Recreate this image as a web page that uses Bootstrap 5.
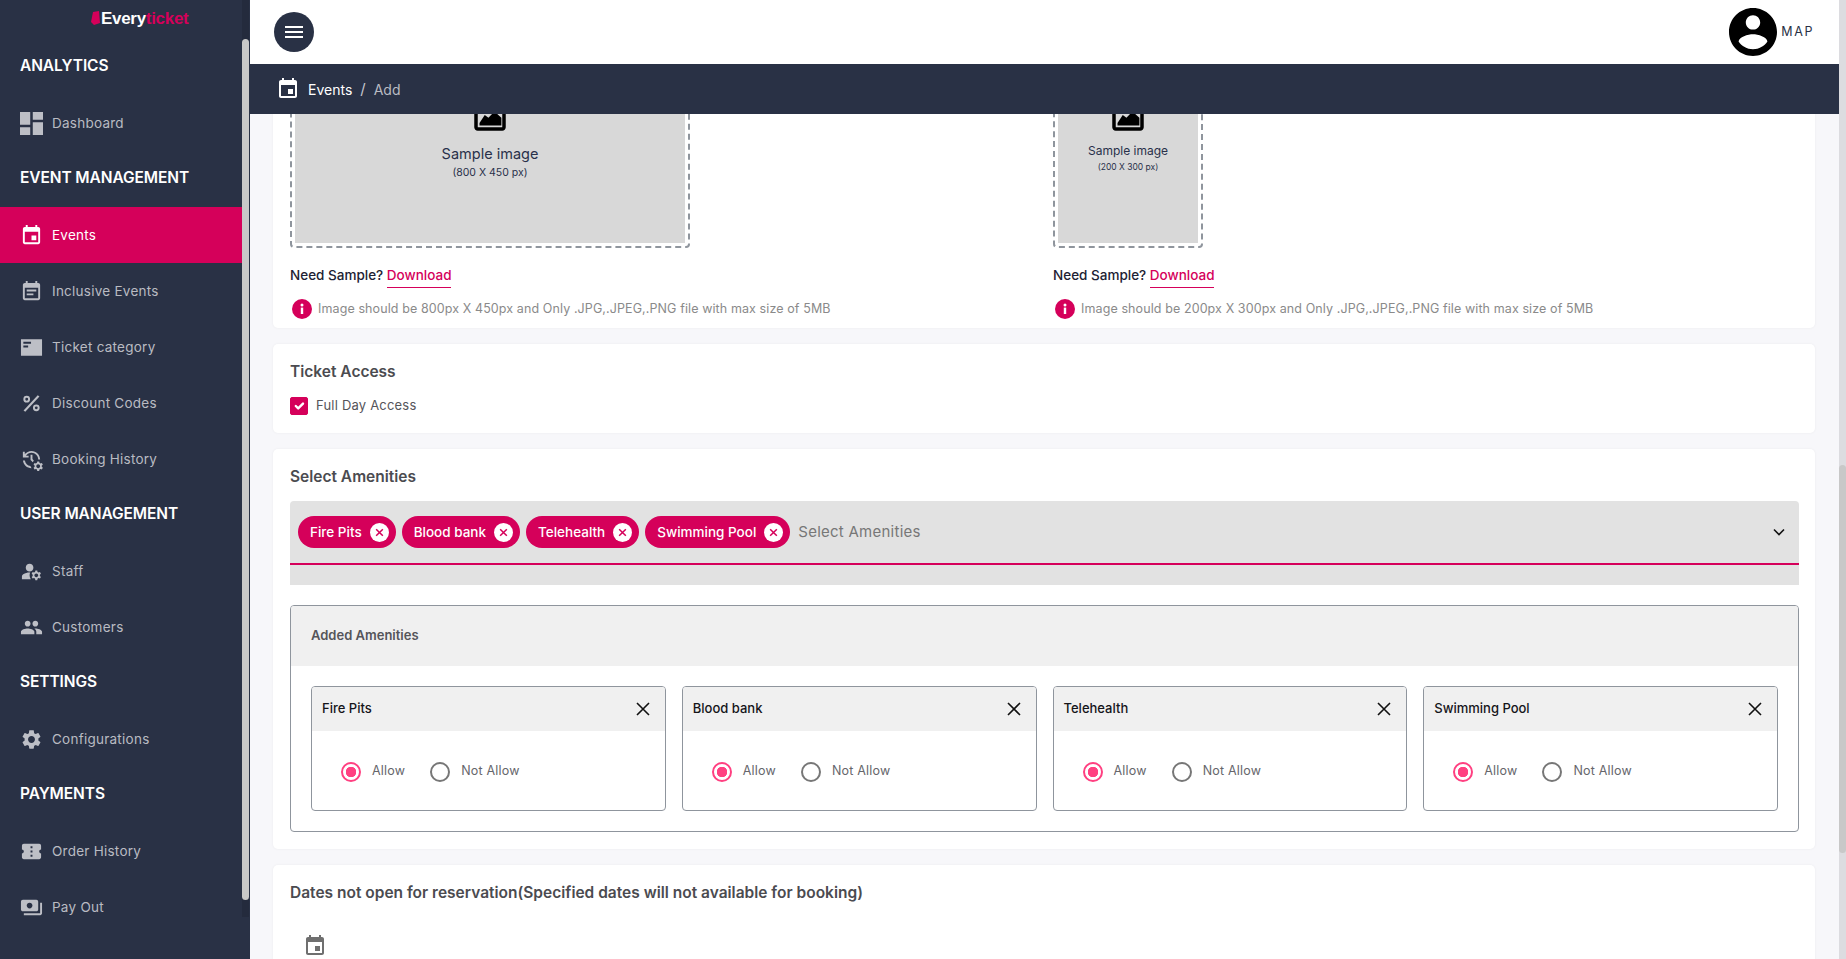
<!DOCTYPE html>
<html lang="en">
<head>
    <meta charset="UTF-8">
    <meta name="viewport" content="width=device-width, initial-scale=1.0">
    <link href="https://cdn.jsdelivr.net/npm/bootstrap@5.3.2/dist/css/bootstrap.min.css" rel="stylesheet">
    <title>Events - Add</title>
    <style>
        :root { --navy: #293145; --pink: #d5005a; --rule: #8f959d; }
        html, body { height: 959px; overflow: hidden; }
        body { font-family: Inter, "Open Sans", "Liberation Sans", sans-serif; background: #f7f7fa; }

        .app-shell { height: 959px; }
        .side-bar { width: 250px; flex: none; background: var(--navy); }
        .side-menu { width: 242px; flex: none; }
        .logo-row { height: 39px; padding: 10px 0 0 91px; font-family: "Liberation Sans Narrow", "Liberation Sans", sans-serif; font-size: 17px; line-height: 17px; font-weight: 700; letter-spacing: -.3px; }
        .logo-row svg { width: 9px; height: 14px; margin-right: 1px; vertical-align: -1px; }
        .logo-light { color: #fff; }
        .logo-pink { color: var(--pink); }
        .menu-head, .menu-item { height: 56px; padding-left: 20px; display: flex; align-items: center; }
        .menu-head { color: #fff; font-size: 15.5px; font-weight: 600; padding-bottom: 2px; letter-spacing: -.1px; }
        .menu-item { color: #b9bbc2; font-size: 13.5px; letter-spacing: .25px; text-decoration: none; gap: 9px; }
        .menu-item svg { width: 23px; height: 23px; fill: #bdbfc6; flex: none; }
        .menu-item.is-active { background: var(--pink); color: #fff; }
        .menu-item.is-active svg { fill: #fff; }
        .side-track { width: 7px; height: 917px; background: #242b3d; }
        .side-thumb { height: 861px; margin-top: 39px; background: #c8c8c8; border-radius: 4px; }

        .main-col { min-width: 0; }
        .top-bar { height: 64px; padding: 0 25px 0 24px; background: #fff; }
        .burger { width: 40px; height: 40px; border-radius: 50%; background: var(--navy); border: 0; padding: 0; }
        .burger span { display: block; width: 18px; height: 2px; background: #fff; margin: 3px auto 0; }
        .burger span:first-child { margin-top: 0; }
        .avatar-icon { width: 48px; height: 48px; margin: 0 4px; }
        .user-tag { color: var(--navy); font-size: 12.5px; letter-spacing: 1.6px; margin-left: 0; }
        .crumb-bar { height: 50px; padding-left: 26px; background: var(--navy); color: #fff; font-size: 14px; }
        .crumb-bar svg { width: 24px; height: 24px; fill: #fff; margin-right: 8px; }
        .crumb-sep { margin: 0 8px; color: #c5c7cd; font-size: 15px; }
        .crumb-now { color: #b9bbc2; }

        .scroll-view { height: 845px; overflow: hidden; padding: 0 24px 0 23px; }
        .scroll-inner { margin-top: -105px; }
        .panel { border: 0; border-radius: 5px; margin-bottom: 16px; padding: 16px 16px 0 17px; box-shadow: 0 0 3px rgba(0, 0, 0, .05); }
        .panel-first { margin-top: 0; padding-top: 0; height: 319px; border-radius: 0 0 5px 5px; }
        .panel-title { color: #4b4b50; font-size: 15.5px; line-height: 24px; font-weight: 600; margin: 0; }

        .upload-col { width: 763px; flex: none; padding-top: 9px; }
        .drop-zone { border: 2px dashed var(--rule); border-radius: 4px; padding: 3px; height: 230px; }
        .drop-wide { width: 400px; }
        .drop-tall { width: 150px; }
        .drop-fill { background: #d8d8d8; height: 100%; text-align: center; color: #29314a; padding-top: 71px; }
        .drop-fill svg { display: block; margin: 0 auto; }
        .drop-wide svg { width: 42px; height: 42px; margin-bottom: 8px; }
        .drop-tall svg { width: 42px; height: 42px; margin-bottom: 6px; }
        .sample-big { font-size: 14.5px; line-height: 20px; }
        .sample-tiny { font-size: 10.5px; line-height: 17px; }
        .drop-tall .sample-big { font-size: 12px; line-height: 18px; }
        .drop-tall .sample-tiny { font-size: 8.5px; line-height: 14px; }
        .need-line { margin-top: 17px; font-size: 13.5px; line-height: 20px; font-weight: 500; color: #1d2233; }
        .need-line a { color: var(--pink); text-decoration: none; border-bottom: 1px solid var(--pink); padding-bottom: 2px; display: inline-block; line-height: 20px; }
        .hint-line { margin-top: 11px; gap: 6px; color: #8a8a8a; font-size: 12.5px; line-height: 20px; letter-spacing: .1px; padding-left: 2px; }
        .hint-line svg { width: 20px; height: 20px; flex: none; }

        .access-row { margin: 13px 0 18px; height: 18px; }
        .form-check-input.pink-box { width: 18px; height: 18px; margin: 0 8px 0 0; border-radius: 2px; }
        .form-check-input.pink-box:checked { background-color: var(--pink); border-color: var(--pink); }
        .access-row label { color: #55555a; font-size: 13px; letter-spacing: .2px; }

        .select-wrap { margin-top: 12px; background: #e2e2e2; padding-bottom: 20px; border-radius: 4px 4px 0 0; }
        .select-line { height: 64px; padding: 0 14px 0 8px; border-bottom: 2px solid var(--pink); gap: 6px; }
        .tag-pill { height: 32px; padding: 0 7px 0 12px; gap: 8px; border-radius: 16px; background: var(--pink); color: #fff; font-size: 13.5px; font-weight: 500; }
        .tag-pill svg { width: 19px; height: 19px; flex: none; }
        .select-hint { color: #777; font-size: 15px; letter-spacing: .25px; margin-left: 2px; }
        .select-line .chev { width: 12px; height: 8px; margin-left: auto; }

        .added-box { margin: 20px 0 17px; border: 1px solid var(--rule); border-radius: 4px; overflow: hidden; }
        .added-head { height: 60px; padding-left: 20px; background: #f0f0f0; color: #55555a; font-size: 13px; font-weight: 600; }
        .added-body { padding: 20px 20px; }
        .mini-card { border: 1px solid var(--rule); border-radius: 4px; height: 125px; overflow: hidden; }
        .mini-head { height: 44px; padding: 0 15px 0 10px; background: #f0f0f0; color: #15151a; font-size: 13px; font-weight: 500; }
        .mini-head svg { width: 14px; height: 14px; }
        .mini-body { height: 79px; padding: 2px 0 0 29px; gap: 25px; }
        .radio-opt { gap: 11px; color: #66666b; font-size: 12.5px; letter-spacing: .2px; }
        .form-check-input.pink-radio { width: 20px; height: 20px; margin: 0; border: 2px solid #777; background-color: #fff; }
        .form-check-input.pink-radio:checked { border-color: #ff4081; background-image: radial-gradient(circle, #ff4081 0 5px, #fff 5.5px); }

        .panel-last { height: 120px; margin-bottom: 0; }
        .date-icon { width: 24px; height: 24px; fill: #6f6f6f; display: block; margin: 29px 0 0 13px; }

        .page-track { width: 7px; flex: none; height: 959px; background: #dcdce0; }
        .page-thumb { height: 388px; margin-top: 465px; background: #c8c8c8; border-radius: 4px; }
    </style>
</head>
<body>
<svg width="0" height="0" class="position-absolute">
    <symbol id="i-dashboard" viewBox="3 3 18 18"><path d="M3 13h8V3H3v10zm0 8h8v-6H3v6zm10 0h8V11h-8v10zm0-18v6h8V3h-8z"/></symbol>
    <symbol id="i-event" viewBox="0 0 24 24"><path d="M17 12h-5v5h5v-5zM16 1v2H8V1H6v2H5c-1.11 0-1.99.9-1.99 2L3 19c0 1.1.89 2 2 2h14c1.1 0 2-.9 2-2V5c0-1.1-.9-2-2-2h-1V1h-2zm3 18H5V8h14v11z"/></symbol>
    <symbol id="i-note" viewBox="0 0 24 24"><path d="M17 10H7v2h10v-2zm2-7h-1V1h-2v2H8V1H6v2H5c-1.11 0-1.99.9-1.99 2L3 19c0 1.1.89 2 2 2h14c1.1 0 2-.9 2-2V5c0-1.1-.9-2-2-2zm0 16H5V8h14v11zm-5-5H7v2h7v-2z"/></symbol>
    <symbol id="i-ticket" viewBox="0 0 24 24"><path fill-rule="evenodd" d="M1 3.5h22v17H1zM3.5 6v2h8V6zm0 4v2h5v-2z"/></symbol>
    <symbol id="i-percent" viewBox="0 0 24 24"><path d="M7 4a3.5 3.5 0 1 0 0 7 3.5 3.5 0 0 0 0-7zm0 2a1.5 1.5 0 1 1 0 3 1.5 1.5 0 0 1 0-3zM17 13a3.5 3.5 0 1 0 0 7 3.5 3.5 0 0 0 0-7zm0 2a1.5 1.5 0 1 1 0 3 1.5 1.5 0 0 1 0-3zM18.5 3.5l1.8 1.3L5.5 20.5l-1.8-1.3z"/></symbol>
    <symbol id="i-history" viewBox="0 0 24 24"><path d="M22.69 18.37l1.14-1-1-1.73-1.45.49c-.32-.27-.68-.48-1.08-.63L20 14h-2l-.3 1.49c-.4.15-.76.36-1.08.63l-1.45-.49-1 1.73 1.14 1c-.08.5-.08.76 0 1.26l-1.14 1 1 1.73 1.45-.49c.32.27.68.48 1.08.63L18 24h2l.3-1.49c.4-.15.76-.36 1.08-.63l1.45.49 1-1.73-1.14-1c.08-.51.08-.77 0-1.27zM19 21c-1.1 0-2-.9-2-2s.9-2 2-2 2 .9 2 2-.9 2-2 2zM11 7v5.41l2.36 2.36 1.04-1.79-1.4-1.39V7h-2zm10 5c0-4.97-4.03-9-9-9-2.83 0-5.35 1.32-7 3.36V4H3v6h6V8H6.26C7.53 6.19 9.63 5 12 5c3.86 0 7 3.14 7 7h2zm-10.14 6.91c-2.99-.49-5.35-2.9-5.78-5.91H3.06c.5 4.5 4.31 8 8.94 8h.07l-1.21-2.09z"/></symbol>
    <symbol id="i-staff" viewBox="0 0 24 24"><path d="M10.67 13.02c-.22-.01-.44-.02-.67-.02-2.42 0-4.68.67-6.61 1.82-.88.52-1.39 1.5-1.39 2.53V20h9.26c-.79-1.13-1.26-2.51-1.26-4 0-1.07.25-2.07.67-2.98zM10 12c2.21 0 4-1.79 4-4s-1.79-4-4-4-4 1.79-4 4 1.79 4 4 4zM20.75 16c0-.22-.03-.42-.06-.63l1.14-1.01-1-1.73-1.45.49c-.32-.27-.68-.48-1.08-.63L18 11h-2l-.3 1.49c-.4.15-.76.36-1.08.63l-1.45-.49-1 1.73 1.14 1.01c-.03.21-.06.41-.06.63s.03.42.06.63l-1.14 1.01 1 1.73 1.45-.49c.32.27.68.48 1.08.63L16 21h2l.3-1.49c.4-.15.76-.36 1.08-.63l1.45.49 1-1.73-1.14-1.01c.03-.21.06-.41.06-.63zM17 18c-1.1 0-2-.9-2-2s.9-2 2-2 2 .9 2 2-.9 2-2 2z"/></symbol>
    <symbol id="i-people" viewBox="0 0 24 24"><path d="M16 11c1.66 0 2.99-1.34 2.99-3S17.66 5 16 5c-1.66 0-3 1.34-3 3s1.34 3 3 3zm-8 0c1.66 0 2.99-1.34 2.99-3S9.66 5 8 5C6.34 5 5 6.34 5 8s1.34 3 3 3zm0 2c-2.33 0-7 1.17-7 3.5V19h14v-2.5c0-2.33-4.67-3.5-7-3.5zm8 0c-.29 0-.62.02-.97.05 1.16.84 1.97 1.97 1.97 3.45V19h6v-2.5c0-2.33-4.67-3.5-7-3.5z"/></symbol>
    <symbol id="i-gear" viewBox="0 0 24 24"><path d="M19.14 12.94c.04-.3.06-.61.06-.94 0-.32-.02-.64-.07-.94l2.03-1.58c.18-.14.23-.41.12-.61l-1.92-3.32c-.12-.22-.37-.29-.59-.22l-2.39.96c-.5-.38-1.03-.7-1.62-.94l-.36-2.54c-.04-.24-.24-.41-.48-.41h-3.84c-.24 0-.43.17-.47.41l-.36 2.54c-.59.24-1.13.57-1.62.94l-2.39-.96c-.22-.08-.47 0-.59.22L2.74 8.87c-.12.21-.08.47.12.61l2.03 1.58c-.05.3-.09.63-.09.94s.02.64.07.94l-2.03 1.58c-.18.14-.23.41-.12.61l1.92 3.32c.12.22.37.29.59.22l2.39-.96c.5.38 1.03.7 1.62.94l.36 2.54c.05.24.24.41.48.41h3.84c.24 0 .44-.17.47-.41l.36-2.54c.59-.24 1.13-.56 1.62-.94l2.39.96c.22.08.47 0 .59-.22l1.92-3.32c.12-.22.07-.47-.12-.61l-2.01-1.58zM12 15.6c-1.98 0-3.6-1.62-3.6-3.6s1.62-3.6 3.6-3.6 3.6 1.62 3.6 3.6-1.62 3.6-3.6 3.6z"/></symbol>
    <symbol id="i-order" viewBox="0 0 24 24"><path d="M22 10V6c0-1.11-.9-2-2-2H4c-1.1 0-1.99.89-1.99 2v4c1.1 0 1.99.9 1.99 2s-.89 2-2 2v4c0 1.1.9 2 2 2h16c1.1 0 2-.9 2-2v-4c-1.1 0-2-.9-2-2s.9-2 2-2zm-9 7.5h-2v-2h2v2zm0-4.5h-2v-2h2v2zm0-4.5h-2v-2h2v2z"/></symbol>
    <symbol id="i-pay" viewBox="0 0 24 24"><path d="M19 14V6c0-1.1-.9-2-2-2H3c-1.1 0-2 .9-2 2v8c0 1.1.9 2 2 2h14c1.1 0 2-.9 2-2zm-9-1c-1.66 0-3-1.34-3-3s1.34-3 3-3 3 1.34 3 3-1.34 3-3 3zm13-6v11c0 1.1-.9 2-2 2H4v-2h17V7h2z"/></symbol>
    <symbol id="i-picture" viewBox="0 0 24 24"><path d="M19 5v14H5V5h14m0-2H5c-1.1 0-2 .9-2 2v14c0 1.1.9 2 2 2h14c1.1 0 2-.9 2-2V5c0-1.1-.9-2-2-2z"/><path d="M14.5 10l-3.4 3.6L9 12l-3 4.5V18h12.5v-4.5z"/></symbol>
    <symbol id="i-info" viewBox="0 0 20 20"><circle cx="10" cy="10" r="10" fill="#d5005a"/><rect x="8.8" y="8.6" width="2.4" height="6.4" fill="#fff"/><circle cx="10" cy="6" r="1.5" fill="#fff"/></symbol>
    <symbol id="i-chipx" viewBox="0 0 20 20"><circle cx="10" cy="10" r="10" fill="#fff"/><path d="M6.5 6.5l7 7m0-7l-7 7" stroke="#d5005a" stroke-width="1.6" fill="none"/></symbol>
    <symbol id="i-close" viewBox="0 0 14 14"><path d="M1 1l12 12M13 1L1 13" stroke="#111" stroke-width="1.6" fill="none"/></symbol>
</svg>

<div class="app-shell d-flex">
    <!-- sidebar -->
    <aside class="side-bar d-flex">
        <div class="side-menu">
            <div class="logo-row">
                <svg viewBox="0 0 9 14"><path d="M2 1l6-1 1 12-6 2-3-3z" fill="#d5005a"/></svg><span class="logo-light">Every</span><span class="logo-pink">ticket</span>
            </div>
            <div class="menu-head">ANALYTICS</div>
            <a class="menu-item" href="#"><svg><use href="#i-dashboard"/></svg>Dashboard</a>
            <div class="menu-head">EVENT MANAGEMENT</div>
            <a class="menu-item is-active" href="#"><svg><use href="#i-event"/></svg>Events</a>
            <a class="menu-item" href="#"><svg><use href="#i-note"/></svg>Inclusive Events</a>
            <a class="menu-item" href="#"><svg><use href="#i-ticket"/></svg>Ticket category</a>
            <a class="menu-item" href="#"><svg><use href="#i-percent"/></svg>Discount Codes</a>
            <a class="menu-item" href="#"><svg><use href="#i-history"/></svg>Booking History</a>
            <div class="menu-head">USER MANAGEMENT</div>
            <a class="menu-item" href="#"><svg><use href="#i-staff"/></svg>Staff</a>
            <a class="menu-item" href="#"><svg><use href="#i-people"/></svg>Customers</a>
            <div class="menu-head">SETTINGS</div>
            <a class="menu-item" href="#"><svg><use href="#i-gear"/></svg>Configurations</a>
            <div class="menu-head">PAYMENTS</div>
            <a class="menu-item" href="#"><svg><use href="#i-order"/></svg>Order History</a>
            <a class="menu-item" href="#"><svg><use href="#i-pay"/></svg>Pay Out</a>
        </div>
        <div class="side-track"><div class="side-thumb"></div></div>
    </aside>

    <div class="main-col flex-grow-1">
        <!-- top bar -->
        <header class="top-bar d-flex align-items-center justify-content-between">
            <button class="burger d-flex flex-column align-items-center justify-content-center" type="button" aria-label="Menu"><span></span><span></span><span></span></button>
            <div class="d-flex align-items-center">
                <svg class="avatar-icon" viewBox="2 2 20 20"><path d="M12 2C6.48 2 2 6.48 2 12s4.48 10 10 10 10-4.48 10-10S17.52 2 12 2zm0 3c1.66 0 3 1.34 3 3s-1.34 3-3 3-3-1.34-3-3 1.34-3 3-3zm0 14.2c-2.5 0-4.71-1.28-6-3.22.03-1.99 4-3.08 6-3.08 1.99 0 5.97 1.09 6 3.08-1.29 1.94-3.5 3.22-6 3.22z"/></svg>
                <span class="user-tag">MAP</span>
            </div>
        </header>

        <!-- breadcrumb -->
        <nav class="crumb-bar d-flex align-items-center">
            <svg><use href="#i-event"/></svg>
            <span>Events</span><span class="crumb-sep">/</span><span class="crumb-now">Add</span>
        </nav>

        <div class="scroll-view">
            <div class="scroll-inner">
                <!-- banner uploads -->
                <div class="card panel panel-first">
                    <div class="d-flex">
                        <div class="upload-col">
                            <div class="drop-zone drop-wide">
                                <div class="drop-fill">
                                    <svg><use href="#i-picture"/></svg>
                                    <div class="sample-big">Sample image</div>
                                    <div class="sample-tiny">(800 X 450 px)</div>
                                </div>
                            </div>
                            <div class="need-line">Need Sample? <a href="#">Download</a></div>
                            <div class="hint-line d-flex align-items-center"><svg><use href="#i-info"/></svg>Image should be 800px X 450px and Only .JPG,.JPEG,.PNG file with max size of 5MB</div>
                        </div>
                        <div class="upload-col">
                            <div class="drop-zone drop-tall">
                                <div class="drop-fill">
                                    <svg><use href="#i-picture"/></svg>
                                    <div class="sample-big">Sample image</div>
                                    <div class="sample-tiny">(200 X 300 px)</div>
                                </div>
                            </div>
                            <div class="need-line">Need Sample? <a href="#">Download</a></div>
                            <div class="hint-line d-flex align-items-center"><svg><use href="#i-info"/></svg>Image should be 200px X 300px and Only .JPG,.JPEG,.PNG file with max size of 5MB</div>
                        </div>
                    </div>
                </div>

                <!-- ticket access -->
                <div class="card panel">
                    <h6 class="panel-title">Ticket Access</h6>
                    <div class="access-row d-flex align-items-center">
                        <input class="form-check-input pink-box" type="checkbox" id="fullDay" checked>
                        <label for="fullDay">Full Day Access</label>
                    </div>
                </div>

                <!-- amenities -->
                <div class="card panel">
                    <h6 class="panel-title">Select Amenities</h6>
                    <div class="select-wrap">
                        <div class="select-line d-flex align-items-center">
                            <span class="tag-pill d-flex align-items-center">Fire Pits<svg><use href="#i-chipx"/></svg></span>
                            <span class="tag-pill d-flex align-items-center">Blood bank<svg><use href="#i-chipx"/></svg></span>
                            <span class="tag-pill d-flex align-items-center">Telehealth<svg><use href="#i-chipx"/></svg></span>
                            <span class="tag-pill d-flex align-items-center">Swimming Pool<svg><use href="#i-chipx"/></svg></span>
                            <span class="select-hint">Select Amenities</span>
                            <svg class="chev" viewBox="0 0 12 8"><path d="M1 1.5l5 5 5-5" stroke="#111" stroke-width="1.6" fill="none"/></svg>
                        </div>
                    </div>
                    <div class="added-box">
                        <div class="added-head d-flex align-items-center">Added Amenities</div>
                        <div class="added-body">
                            <div class="row row-cols-4 g-3">
                                <div class="col">
                                    <div class="mini-card">
                                        <div class="mini-head d-flex align-items-center justify-content-between">Fire Pits<svg><use href="#i-close"/></svg></div>
                                        <div class="mini-body d-flex align-items-center">
                                            <label class="radio-opt d-flex align-items-center"><input class="form-check-input pink-radio" type="radio" name="r1" checked>Allow</label>
                                            <label class="radio-opt d-flex align-items-center"><input class="form-check-input pink-radio" type="radio" name="r1">Not Allow</label>
                                        </div>
                                    </div>
                                </div>
                                <div class="col">
                                    <div class="mini-card">
                                        <div class="mini-head d-flex align-items-center justify-content-between">Blood bank<svg><use href="#i-close"/></svg></div>
                                        <div class="mini-body d-flex align-items-center">
                                            <label class="radio-opt d-flex align-items-center"><input class="form-check-input pink-radio" type="radio" name="r2" checked>Allow</label>
                                            <label class="radio-opt d-flex align-items-center"><input class="form-check-input pink-radio" type="radio" name="r2">Not Allow</label>
                                        </div>
                                    </div>
                                </div>
                                <div class="col">
                                    <div class="mini-card">
                                        <div class="mini-head d-flex align-items-center justify-content-between">Telehealth<svg><use href="#i-close"/></svg></div>
                                        <div class="mini-body d-flex align-items-center">
                                            <label class="radio-opt d-flex align-items-center"><input class="form-check-input pink-radio" type="radio" name="r3" checked>Allow</label>
                                            <label class="radio-opt d-flex align-items-center"><input class="form-check-input pink-radio" type="radio" name="r3">Not Allow</label>
                                        </div>
                                    </div>
                                </div>
                                <div class="col">
                                    <div class="mini-card">
                                        <div class="mini-head d-flex align-items-center justify-content-between">Swimming Pool<svg><use href="#i-close"/></svg></div>
                                        <div class="mini-body d-flex align-items-center">
                                            <label class="radio-opt d-flex align-items-center"><input class="form-check-input pink-radio" type="radio" name="r4" checked>Allow</label>
                                            <label class="radio-opt d-flex align-items-center"><input class="form-check-input pink-radio" type="radio" name="r4">Not Allow</label>
                                        </div>
                                    </div>
                                </div>
                            </div>
                        </div>
                    </div>
                </div>

                <!-- closed dates -->
                <div class="card panel panel-last">
                    <h6 class="panel-title">Dates not open for reservation(Specified dates will not available for booking)</h6>
                    <svg class="date-icon"><use href="#i-event"/></svg>
                </div>
            </div>
        </div>
    </div>

    <div class="page-track"><div class="page-thumb"></div></div>
</div>

<script src="https://cdn.jsdelivr.net/npm/bootstrap@5.3.2/dist/js/bootstrap.bundle.min.js"></script>
</body>
</html>
